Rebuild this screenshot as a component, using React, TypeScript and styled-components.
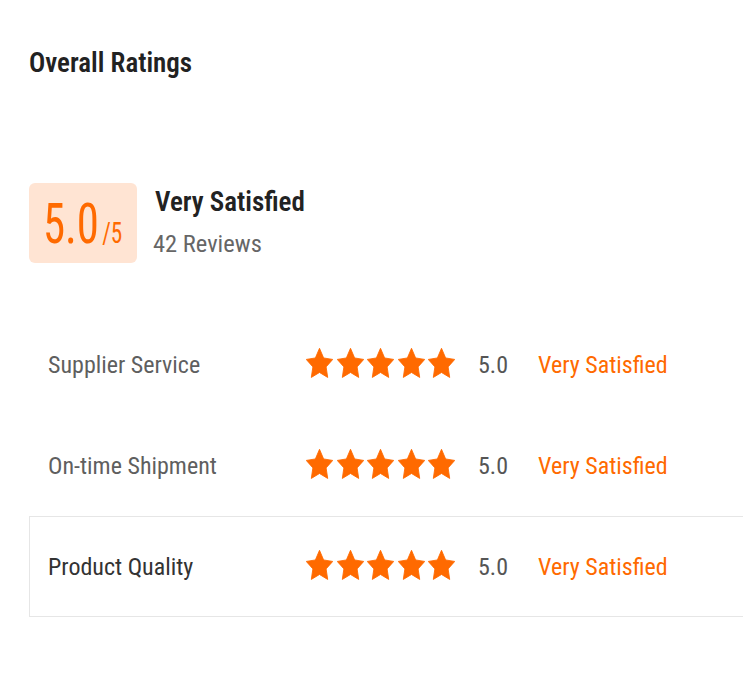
import React from "react";
import styled, { createGlobalStyle } from "styled-components";

const GlobalStyle = createGlobalStyle`
  html, body { margin: 0; padding: 0; background: #ffffff; }
  body { font-family: "Roboto Condensed", Roboto, "Liberation Sans", sans-serif; }
`;

const Page = styled.div`
  width: 750px;
  box-sizing: border-box;
  padding: 47px 7px 0 29px;
`;

const Title = styled.h2`
  margin: 0;
  font-size: 27px;
  line-height: 32px;
  font-weight: 600;
  color: #222;
`;

const Summary = styled.div`
  display: flex;
  align-items: flex-start;
  gap: 18px;
  margin-top: 104px;
`;

const ScoreBox = styled.div`
  width: 108px;
  height: 80px;
  border-radius: 6px;
  background: #ffe4d3;
  display: flex;
  align-items: center;
  justify-content: center;
`;

const ScoreText = styled.div`
  color: #ff6a00;
  display: flex;
  align-items: baseline;
  transform: scaleX(0.8);
  margin-top: 2px;
`;

const BigNum = styled.span`
  font-size: 56px;
  line-height: 56px;
`;

const OutOf = styled.span`
  font-size: 29px;
  line-height: 29px;
  margin-left: 4px;
`;

const SummaryText = styled.div`
  display: flex;
  flex-direction: column;
  gap: 11px;
  padding-top: 3px;
`;

const Verdict = styled.div`
  font-size: 27px;
  line-height: 32px;
  font-weight: 600;
  color: #222;
`;

const Reviews = styled.div`
  font-size: 24.5px;
  line-height: 30px;
  color: #666;
  margin-left: -2px;
`;

const List = styled.div`
  margin-top: 51px;
  display: flex;
  flex-direction: column;
`;

const Row = styled.div<{ $active?: boolean }>`
  height: 101px;
  box-sizing: border-box;
  display: flex;
  align-items: center;
  padding-left: 18px;
  border: 1px solid ${(p) => (p.$active ? "#e6e6e6" : "transparent")};
  border-right: none;
`;

const Label = styled.div<{ $active?: boolean }>`
  width: 258px;
  font-size: 24px;
  color: ${(p) => (p.$active ? "#333" : "#5f5f5f")};
`;

const Stars = styled.div`
  display: flex;
  gap: 3.5px;
  margin-right: 23px;
  margin-top: -4px;
`;

const Num = styled.div`
  width: 60px;
  font-size: 24px;
  color: #555;
`;

const Level = styled.div`
  font-size: 24px;
  color: #ff6a00;
`;

const Star = () => (
  <svg width="27" height="30" viewBox="2 2 20 19.3" preserveAspectRatio="none">
    <path
      d="M12 2.2l3.05 6.2 6.75 0.95-4.9 4.8 1.17 6.78L12 17.75l-6.07 3.18 1.17-6.78-4.9-4.8 6.75-0.95z"
      fill="#ff6a00"
      stroke="#ff6a00"
      strokeWidth="0.6"
      strokeLinejoin="round"
    />
  </svg>
);

const rows = [
  { label: "Supplier Service", score: "5.0", level: "Very Satisfied" },
  { label: "On-time Shipment", score: "5.0", level: "Very Satisfied" },
  { label: "Product Quality", score: "5.0", level: "Very Satisfied", active: true },
];

export default function App() {
  return (
    <>
      <GlobalStyle />
      <Page>
        <Title>Overall Ratings</Title>
        <Summary>
          <ScoreBox>
            <ScoreText>
              <BigNum>5.0</BigNum>
              <OutOf>/5</OutOf>
            </ScoreText>
          </ScoreBox>
          <SummaryText>
            <Verdict>Very Satisfied</Verdict>
            <Reviews>42 Reviews</Reviews>
          </SummaryText>
        </Summary>
        <List>
          {rows.map((r) => (
            <Row key={r.label} $active={r.active}>
              <Label $active={r.active}>{r.label}</Label>
              <Stars>
                {[0, 1, 2, 3, 4].map((i) => (
                  <Star key={i} />
                ))}
              </Stars>
              <Num>{r.score}</Num>
              <Level>{r.level}</Level>
            </Row>
          ))}
        </List>
      </Page>
    </>
  );
}
